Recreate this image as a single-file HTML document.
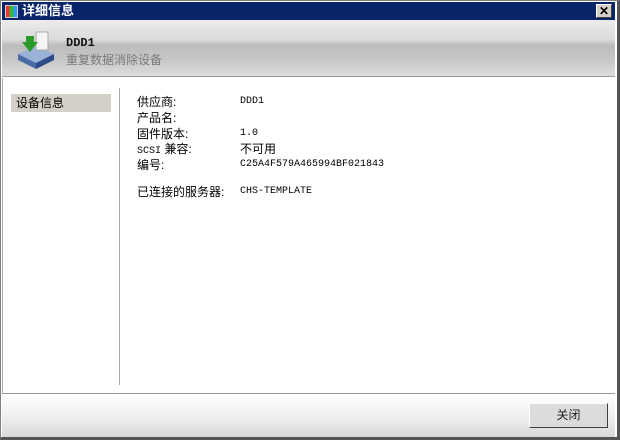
<!DOCTYPE html>
<html><head><meta charset="utf-8"><style>
*{margin:0;padding:0;box-sizing:border-box}
body{width:620px;height:440px;overflow:hidden;background:#d4d0c8;font-family:"Liberation Sans","Noto Sans CJK SC","WenQuanYi Zen Hei",sans-serif;font-size:12px;position:relative;color:#000}
.win{position:absolute;left:0;top:0;width:620px;height:440px;border:1px solid #808080;border-right:3px solid #555;border-bottom:3px solid #555;background:#fff}
.title{position:absolute;left:2px;top:2px;width:613px;height:18px;background:#0a246a;color:#fff;font-weight:bold;font-size:13px;line-height:18px;padding-left:20px}
.ticon{position:absolute;left:3px;top:3px;width:13px;height:13px;background:linear-gradient(90deg,#e33 0 33%,#3b3 33% 66%,#39f 66%);border:1px solid #ccc}
.close{position:absolute;right:3px;top:2px;width:16px;height:14px;background:#d4d0c8;border:1px solid;border-color:#fff #404040 #404040 #fff;color:#000;font-size:12px;line-height:12px;text-align:center;font-weight:bold}
.head{position:absolute;left:2px;top:20px;width:613px;height:57px;background:linear-gradient(#ececec 0,#dadada 35%,#bcbcbc 45%,#c6c6c6 70%,#dcdcdc 100%);border-bottom:1px solid #999}
.h1{position:absolute;left:64px;top:16px;font-size:12px;font-weight:bold;color:#111;font-family:"Liberation Mono",monospace}
.h2{position:absolute;left:64px;top:31px;font-size:12px;color:#7a7a7a}
.body{position:absolute;left:2px;top:78px;width:613px;height:315px;background:#fff;border-left:1px solid #aaa}
.sel{position:absolute;left:11px;top:94px;width:100px;height:18px;background:#d4d0c8;padding-left:5px;line-height:18px}
.div{position:absolute;left:119px;top:88px;width:1px;height:297px;background:#aaa}
.t{position:absolute;font-size:12px;line-height:16px;white-space:nowrap}
.m{font-family:"Liberation Mono",monospace;font-size:10px}
.foot{position:absolute;left:2px;top:393px;width:613px;height:44px;background:linear-gradient(#fff,#ececec 60%,#d8d8d8);border-top:1px solid #999}
.btn{position:absolute;left:529px;top:403px;width:79px;height:25px;background:#dcdcdc;border:1px solid;border-color:#fff #404040 #404040 #fff;text-align:center;line-height:23px;color:#222}
</style></head><body>
<div class="win"></div>
<div class="title"><div class="ticon"></div>详细信息<div class="close">✕</div></div>
<div class="head">
<svg style="position:absolute;left:14px;top:10px" width="40" height="40" viewBox="0 0 40 40">
<polygon points="2,24 20,16 38,24 20,33" fill="#9ab2d8"/>
<polygon points="2,24 20,33 20,39 2,30" fill="#4a6aa6"/>
<polygon points="20,33 38,24 38,30 20,39" fill="#2e4a88"/>
<rect x="20" y="2" width="12" height="18" fill="#f4f4f4" stroke="#aaa"/>
<path d="M10 6 L18 6 L18 12 L22 12 L14 22 L6 12 L10 12 Z" fill="#2a9a2a"/>
</svg>
<div class="h1">DDD1</div><div class="h2">重复数据消除设备</div>
</div>
<div class="body"></div>
<div class="sel">设备信息</div>
<div class="div"></div>
<div class="t" style="left:137px;top:94px">供应商:</div><div class="t m" style="left:240px;top:94px">DDD1</div>
<div class="t" style="left:137px;top:110px">产品名:</div>
<div class="t" style="left:137px;top:126px">固件版本:</div><div class="t m" style="left:240px;top:126px">1.0</div>
<div class="t" style="left:137px;top:141px"><span class="m">SCSI</span> 兼容:</div><div class="t" style="left:240px;top:141px">不可用</div>
<div class="t" style="left:137px;top:157px">编号:</div><div class="t m" style="left:240px;top:157px">C25A4F579A465994BF021843</div>
<div class="t" style="left:137px;top:184px">已连接的服务器:</div><div class="t m" style="left:240px;top:184px">CHS-TEMPLATE</div>
<div class="foot"></div>
<div class="btn">关闭</div>
</body></html>
